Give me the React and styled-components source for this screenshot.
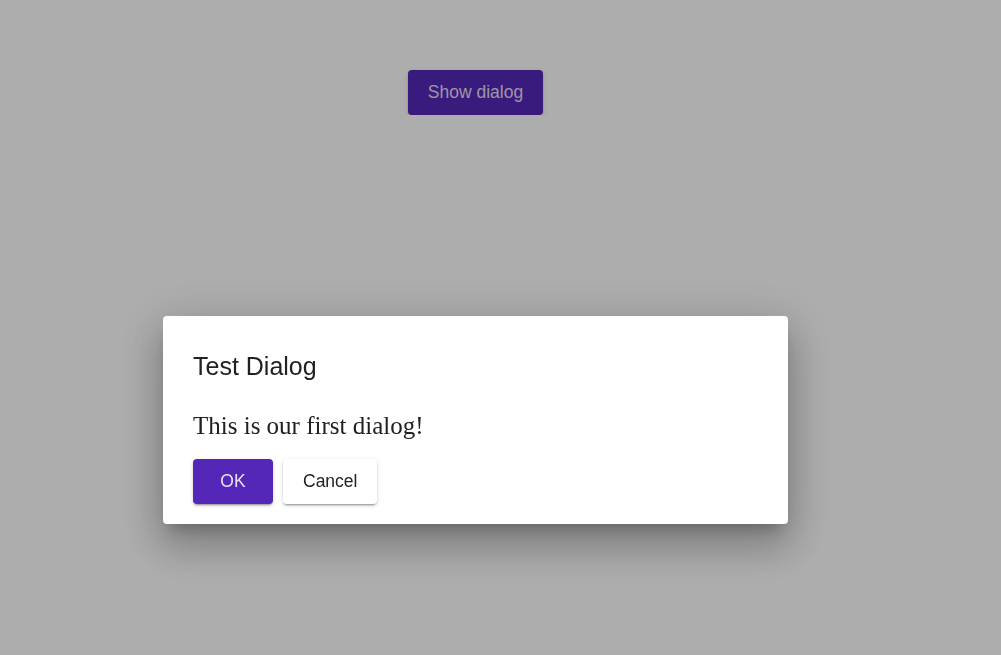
import React from "react";
import styled, { createGlobalStyle } from "styled-components";

const Global = createGlobalStyle`
  html, body { margin: 0; padding: 0; background: #ffffff; }
  body { font-family: "Liberation Sans", Arial, sans-serif; }
`;

const Page = styled.div`
  width: 951px;
  display: flex;
  flex-direction: column;
  align-items: center;
  padding-top: 70px;
`;

const Button = styled.button`
  height: 45px;
  min-width: 80px;
  padding: 0 20px;
  border: none;
  border-radius: 4px;
  font-family: "Liberation Sans", Arial, sans-serif;
  font-size: 17.5px;
  cursor: pointer;
  background: ${(p) => (p.$primary ? "#5427b8" : "#ffffff")};
  color: ${(p) => (p.$primary ? "rgba(255,255,255,0.86)" : "#222222")};
  box-shadow: 0 3px 1px -2px rgba(0, 0, 0, 0.2), 0 2px 2px 0 rgba(0, 0, 0, 0.14),
    0 1px 5px 0 rgba(0, 0, 0, 0.12);
`;

const Overlay = styled.div`
  position: fixed;
  inset: 0;
  background: rgba(0, 0, 0, 0.32);
`;

const DialogLayer = styled.div`
  width: 951px;
  display: flex;
  justify-content: center;
  padding-top: 316px;
`;

const Dialog = styled.div`
  width: 625px;
  box-sizing: border-box;
  background: #ffffff;
  border-radius: 4px;
  padding: 36px 30px 20px;
  box-shadow: 0 11px 15px -7px rgba(0, 0, 0, 0.24),
    0 24px 38px 3px rgba(0, 0, 0, 0.17), 0 9px 46px 8px rgba(0, 0, 0, 0.14);
`;

const Title = styled.h2`
  margin: 0;
  font-family: "Liberation Sans", Arial, sans-serif;
  font-weight: 400;
  font-size: 25px;
  color: #212121;
`;

const Body = styled.p`
  margin: 30.5px 0 0;
  font-family: "Liberation Serif", "Times New Roman", serif;
  font-size: 25px;
  color: #212121;
`;

const Actions = styled.div`
  display: flex;
  gap: 10px;
  margin-top: 19px;
`;

export default function App() {
  return (
    <>
      <Global />
      <Page>
        <Button $primary>Show dialog</Button>
      </Page>
      <Overlay>
        <DialogLayer>
          <Dialog role="dialog">
            <Title>Test Dialog</Title>
            <Body>This is our first dialog!</Body>
            <Actions>
              <Button $primary>OK</Button>
              <Button>Cancel</Button>
            </Actions>
          </Dialog>
        </DialogLayer>
      </Overlay>
    </>
  );
}
